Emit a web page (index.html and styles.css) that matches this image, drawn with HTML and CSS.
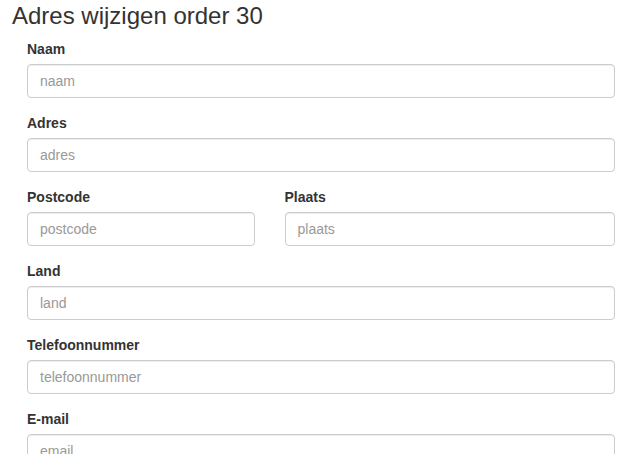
FILE: index.html
```html
<!DOCTYPE html>
<html lang="nl">
<head>
<meta charset="utf-8">
<title>Adres wijzigen order 30</title>
<link rel="stylesheet" href="styles.css">
</head>
<body>
<div class="page">
  <h3 class="title">Adres wijzigen order 30</h3>
  <form class="form">
    <div class="form-group">
      <label class="label" for="naam">Naam</label>
      <input class="input" id="naam" type="text" placeholder="naam">
    </div>
    <div class="form-group">
      <label class="label" for="adres">Adres</label>
      <input class="input" id="adres" type="text" placeholder="adres">
    </div>
    <div class="row">
      <div class="col col-5">
        <div class="form-group">
          <label class="label" for="postcode">Postcode</label>
          <input class="input" id="postcode" type="text" placeholder="postcode">
        </div>
      </div>
      <div class="col col-7">
        <div class="form-group">
          <label class="label" for="plaats">Plaats</label>
          <input class="input" id="plaats" type="text" placeholder="plaats">
        </div>
      </div>
    </div>
    <div class="form-group">
      <label class="label" for="land">Land</label>
      <input class="input" id="land" type="text" placeholder="land">
    </div>
    <div class="form-group">
      <label class="label" for="tel">Telefoonnummer</label>
      <input class="input" id="tel" type="text" placeholder="telefoonnummer">
    </div>
    <div class="form-group">
      <label class="label" for="email">E-mail</label>
      <input class="input" id="email" type="text" placeholder="email">
    </div>
  </form>
</div>
</body>
</html>
```

FILE: styles.css
```css
html, body {
  margin: 0;
  padding: 0;
  background: #fff;
}
body {
  font-family: "Liberation Sans", Arial, Helvetica, sans-serif;
  font-size: 14px;
  line-height: 20px;
  color: #333;
}
.page {
  padding: 0 0 0 12px;
}
.title {
  margin: 3px 0 10px;
  font-size: 24px;
  line-height: 26px;
  font-weight: normal;
  color: #333;
}
.form {
  padding: 0 15px;
}
.form-group {
  margin-bottom: 15px;
}
.label {
  display: block;
  font-weight: bold;
  line-height: 20px;
  margin-bottom: 5px;
}
.input {
  display: block;
  box-sizing: border-box;
  width: 100%;
  height: 34px;
  margin: 0;
  padding: 6px 12px;
  font-family: inherit;
  font-size: 14px;
  line-height: 20px;
  color: #555;
  background: #fff;
  border: 1px solid #ccc;
  border-radius: 4px;
  box-shadow: inset 0 1px 1px rgba(0, 0, 0, 0.075);
  outline: none;
}
.input::placeholder {
  color: #999;
  opacity: 1;
}
.row {
  display: flex;
  margin: 0 -15px;
}
.col {
  box-sizing: border-box;
  padding: 0 15px;
}
.col-5 {
  width: 41.6667%;
}
.col-7 {
  width: 58.3333%;
}
```
